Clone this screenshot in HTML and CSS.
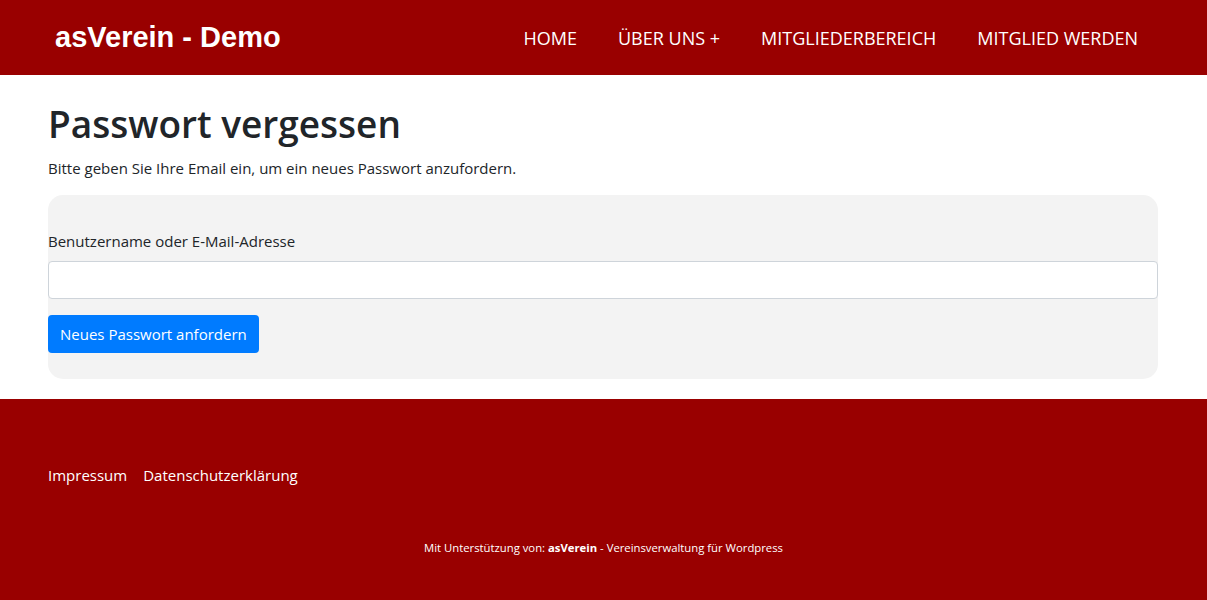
FILE: index.html
```html
<!DOCTYPE html>
<html lang="de">
<head>
<meta charset="utf-8">
<title>Passwort vergessen – asVerein - Demo</title>
<link rel="stylesheet" href="styles.css">
</head>
<body>
<header class="site-header">
  <div class="header-inner">
    <a class="brand" href="#">asVerein - Demo</a>
    <nav class="main-nav">
      <a href="#">HOME</a>
      <a href="#">ÜBER UNS +</a>
      <a href="#">MITGLIEDERBEREICH</a>
      <a href="#">MITGLIED WERDEN</a>
    </nav>
  </div>
</header>
<main class="container">
  <h1 class="page-title">Passwort vergessen</h1>
  <p class="intro">Bitte geben Sie Ihre Email ein, um ein neues Passwort anzufordern.</p>
  <form class="form-box">
    <div class="form-group">
      <label for="user">Benutzername oder E-Mail-Adresse</label>
      <input id="user" type="text" class="form-control">
    </div>
    <button type="button" class="btn-primary">Neues Passwort anfordern</button>
  </form>
</main>
<footer class="site-footer">
  <div class="container footer-links">
    <a href="#">Impressum</a>
    <a href="#">Datenschutzerklärung</a>
  </div>
  <p class="credits">Mit Unterstützung von: <strong>asVerein</strong> - Vereinsverwaltung für Wordpress</p>
</footer>
</body>
</html>
```
FILE: styles.css
```css
* { box-sizing: border-box; }
html, body { margin: 0; padding: 0; }
body {
  font-family: "Open Sans", "Noto Sans", sans-serif;
  font-size: 15px;
  line-height: 1.5;
  color: #212529;
  background: #fff;
}
a { text-decoration: none; color: inherit; }

.site-header {
  background: #990000;
  height: 75px;
}
.header-inner {
  display: flex;
  align-items: center;
  justify-content: space-between;
  height: 100%;
  padding: 0 69px 0 55px;
}
.brand {
  font-family: "Liberation Sans", Arial, sans-serif;
  font-weight: bold;
  font-size: 29px;
  color: #fff;
  margin-top: 1px;
}
.main-nav {
  display: flex;
  gap: 41px;
  margin-top: 2px;
}
.main-nav a {
  color: #fff;
  font-size: 18px;
}

.container {
  width: 1110px;
  margin: 0 48px;
}
main.container { padding-top: 25px; padding-bottom: 20px; }
.page-title {
  font-size: 37px;
  font-weight: 600;
  line-height: 48px;
  margin: 0 0 8px;
}
.intro {
  margin: 0 0 15px;
  line-height: 24px;
}
.form-box {
  background: #f3f3f3;
  border-radius: 15px;
  padding: 34px 0 26px;
}
.form-group { margin-bottom: 16px; }
.form-group label {
  display: block;
  line-height: 24px;
  margin-bottom: 8px;
}
.form-control {
  display: block;
  width: 100%;
  height: 38px;
  border: 1px solid #ced4da;
  border-radius: 4px;
  background: #fff;
  font: inherit;
  padding: 6px 12px;
}
.btn-primary {
  display: inline-block;
  height: 38px;
  padding: 0 12px;
  background: #007bff;
  color: #fff;
  border: 0;
  border-radius: 4px;
  font: inherit;
  font-size: 15px;
}

.site-footer {
  background: #990000;
  color: #fff;
  height: 201px;
  padding-top: 64px;
}
.footer-links {
  display: flex;
  gap: 16px;
  font-size: 15px;
  line-height: 24px;
}
.credits {
  margin: 52px 0 0;
  text-align: center;
  font-size: 11.3px;
  line-height: 18px;
}
.credits strong { font-weight: 700; }
```
